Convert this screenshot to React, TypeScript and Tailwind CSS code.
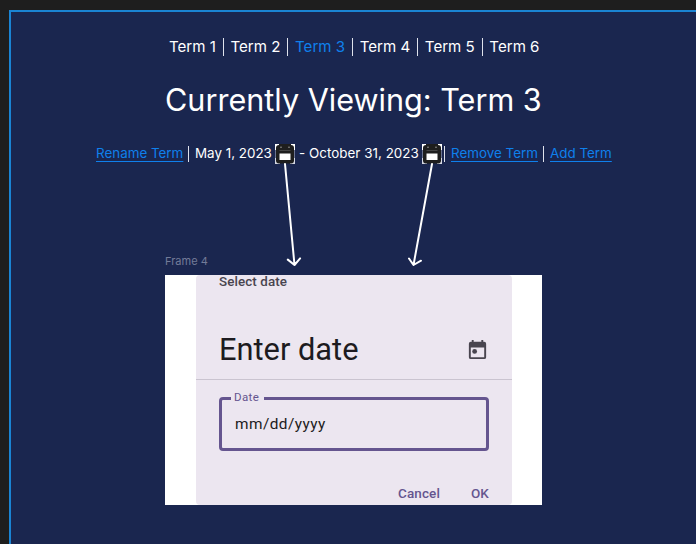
import React from "react";

const terms = ["Term 1", "Term 2", "Term 3", "Term 4", "Term 5", "Term 6"];

function EditCalendar() {
  return (
    <svg className="h-5 w-5 shrink-0" viewBox="0 0 20 20">
      <path d="M0 0h6v6H0zM14 0h6v6h-6z" fill="#fff" />
      <path d="M0 14h5v6H0zM15 14h5v6h-5z" fill="#d5d8e2" />
      <path d="M.4 6v8M19.600 6v8" stroke="#8d94ac" strokeWidth=".8" />
      <rect x="1" y="1" width="18" height="18.500" rx="3" fill="#1e1e1e" />
      <path d="M4 0h12v3H4z" fill="#1e1e1e" />
      <path d="M5 3.200h2M13 3.200h2" stroke="#8b8b8b" />
      <path d="M4.500 6.500h11" stroke="#454545" />
      <path d="M4.500 9.500h11v6.500h-11z" fill="#fff" />
    </svg>
  );
}

export default function App() {
  return (
    <div className="h-[544px] w-[696px] overflow-hidden bg-[#1e1e1e] pl-[9px] pt-[10px] font-['Inter',sans-serif]">
      <main className="relative flex h-full flex-col border-l-2 border-t-2 border-[#1a84d4] bg-[#1a264f] text-white">
        <nav className="ml-[158px] mt-[23px] flex h-6 w-[372px] items-center whitespace-pre text-[15.100px] leading-6">
          {terms.map((term, i) => (
            <React.Fragment key={term}>
              {i > 0 && <span className="mx-[6.800px] h-[18px] w-px shrink-0 bg-[#dfe2ec]" />}
              <span className={term === "Term 3" ? "text-[#0f80ec]" : ""}>{term}</span>
            </React.Fragment>
          ))}
        </nav>
        <h1 className="ml-[154px] mt-[21px] h-10 whitespace-nowrap text-[30.600px] font-normal leading-10">
          Currently Viewing: Term 3
        </h1>
        <div className="ml-[85px] mt-[24px] flex h-5 items-center whitespace-nowrap text-[13.400px] leading-5">
          <a className="w-[87px] pb-[2px] text-[#0f80ec] underline underline-offset-[3px]">Rename Term</a>
          <span className="ml-[5px] h-4 w-px bg-[#dfe2ec]" />
          <span className="ml-[6px] w-[77px] pb-[2px]">May 1, 2023</span>
          <span className="ml-[3px] flex"><EditCalendar /></span>
          <span className="ml-1 w-[121px] pb-[2px] tracking-[0.030px]">- October 31, 2023</span>
          <span className="ml-[2px] flex"><EditCalendar /></span>
          <span className="ml-[2px] h-4 w-px bg-[#dfe2ec]" />
          <a className="ml-[6px] w-[87px] pb-[2px] text-[#0f80ec] underline underline-offset-[3px]">Remove Term</a>
          <span className="ml-[5px] h-4 w-px bg-[#dfe2ec]" />
          <a className="ml-[6px] pb-[2px] text-[#0f80ec] underline underline-offset-[3px]">Add Term</a>
        </div>
        <svg className="absolute left-[259px] top-[148px] h-[112px] w-[180px]" viewBox="270 160 180 112" fill="none" stroke="#fff" strokeWidth="2" strokeLinecap="round" strokeLinejoin="round">
          <path d="M285 164l9.500 101M287.800 259.600l6.700 5.400 5.600-6.600" />
          <path d="M432 164l-18.500 101M409 258.500l4.500 6.500 7.500-4.300" />
        </svg>
        <div className="ml-[154px] mt-[90px] h-[14px] text-[11px] leading-[14px] text-[#737b98]">Frame 4</div>
        <section className="ml-[154px] mt-[7px] flex h-[230px] w-[377px] justify-center overflow-hidden bg-white px-[30px] pl-[31px] font-['Roboto',sans-serif]">
          <div className="flex w-full flex-col rounded-[4px] bg-[#ece6f0]">
            <div className="ml-[23px] mt-[-2px] h-[18px] text-[13.400px] font-medium leading-[18px] tracking-[0.100px] text-[#49454f]">Select date</div>
            <div className="ml-[23px] mr-[23px] mt-[38px] flex h-10 items-center justify-between">
              <h2 className="whitespace-nowrap pt-[2px] text-[30.800px] leading-10 text-[#1d1b20]">Enter date</h2>
              <svg className="h-[23px] w-[23px]" viewBox="0 0 24 24" fill="#49454f">
                <path d="M19 4h-1V2h-2v2H8V2H6v2H5a2 2 0 0 0-2 2v14a2 2 0 0 0 2 2h14a2 2 0 0 0 2-2V6a2 2 0 0 0-2-2Zm0 16H5V10h14v10Z" />
                <circle cx="9" cy="14" r="2.500" />
              </svg>
            </div>
            <div className="mt-[10px] h-px bg-[#cac4d0]" />
            <fieldset className="mx-[23px] mt-[11px] h-[60px] rounded-[4px] border-[3px] border-[#65558f] pl-[9px]">
              <legend className="h-[14px] pl-[3px] pr-[5px] text-[11.500px] leading-[12px] tracking-[0.400px] text-[#65558f]">Date</legend>
              <div className="mt-[9px] pl-[4px] text-[15.400px] leading-5 tracking-[0.450px] text-[#1d1b20]">mm/dd/yyyy</div>
            </fieldset>
            <div className="mr-[23px] mt-[32px] flex h-5 justify-end gap-[31px] text-[13.500px] font-medium leading-5 tracking-[0.100px] text-[#65558f]">
              <span>Cancel</span>
              <span>OK</span>
            </div>
          </div>
        </section>
      </main>
    </div>
  );
}
